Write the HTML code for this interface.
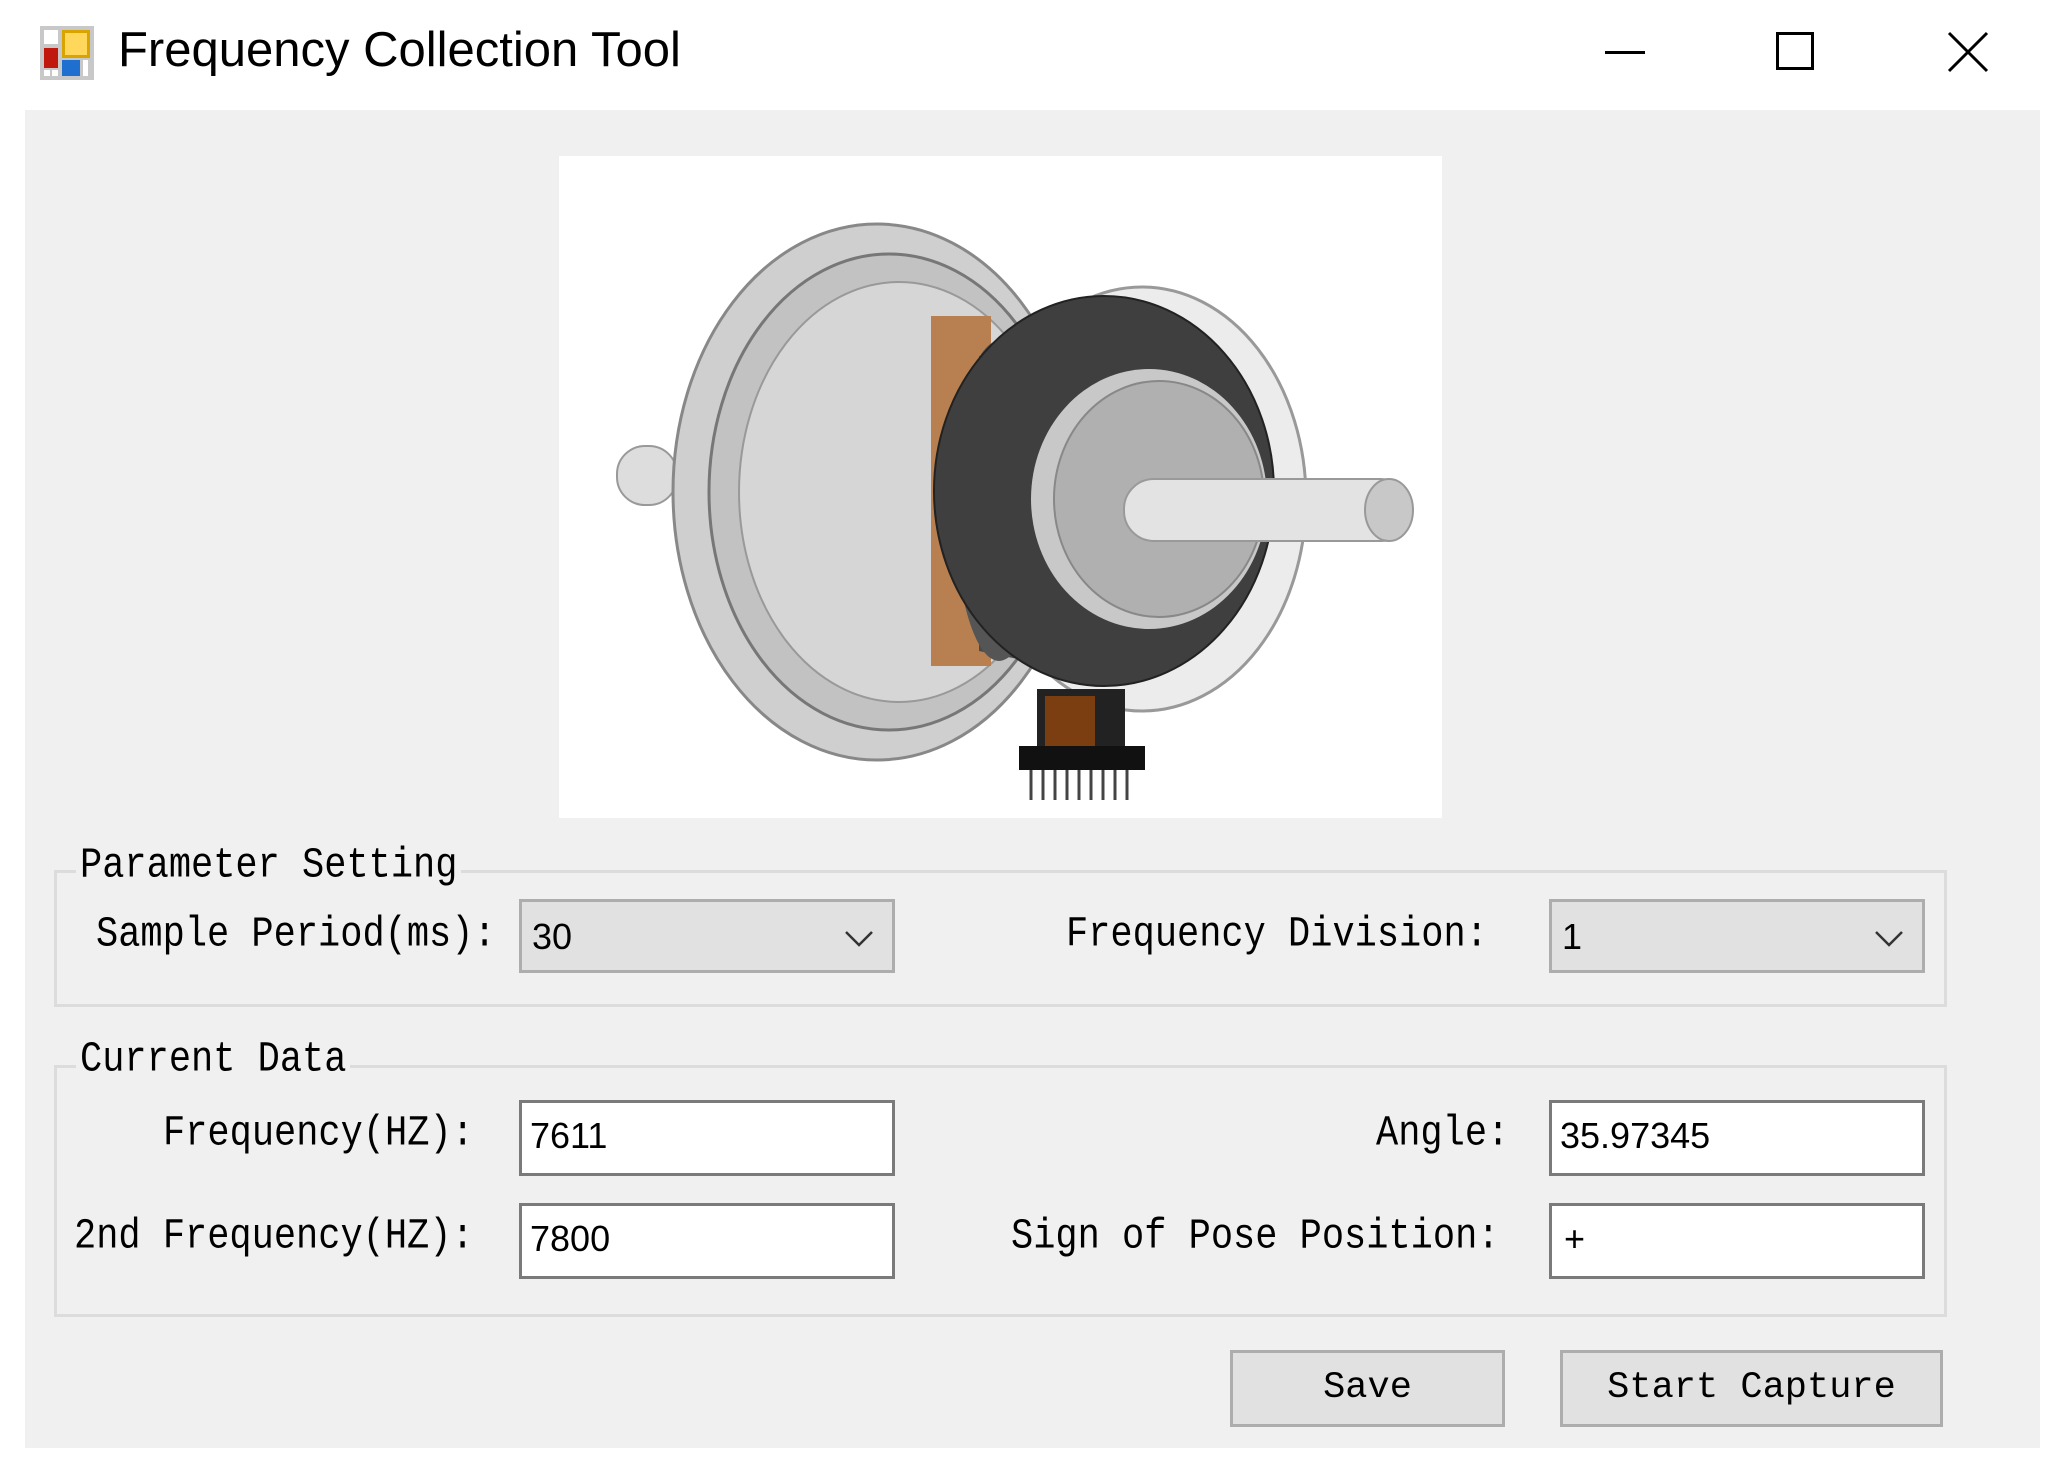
<!DOCTYPE html>
<html><head><meta charset="utf-8"><style>
html,body{margin:0;padding:0;background:#fff;}
body{width:2059px;height:1469px;position:relative;overflow:hidden;font-family:"Liberation Mono",monospace;}
.abs{position:absolute;}
.client{left:25px;top:110px;width:2015px;height:1338px;background:#f0f0f0;}
.title{left:118px;top:22px;font-family:"Liberation Sans",sans-serif;font-size:49px;color:#000;}
.lbl{position:absolute;font-size:37px;color:#000;white-space:nowrap;line-height:40px;transform:scaleY(1.15);}
.grp{position:absolute;border:3px solid #dcdcdc;box-sizing:border-box;}
.combo{position:absolute;background:#e1e1e1;border:3px solid #adadad;box-sizing:border-box;font-family:"Liberation Sans",sans-serif;font-size:36px;}
.tb{position:absolute;background:#fff;border:3px solid #7a7a7a;box-sizing:border-box;font-family:"Liberation Sans",sans-serif;font-size:36px;}
.btn{position:absolute;background:#e1e1e1;border:3px solid #adadad;box-sizing:border-box;text-align:center;font-size:37px;line-height:70px;}
</style></head><body>
<svg class="abs" style="left:40px;top:26px" width="54" height="54" viewBox="0 0 54 54">
<rect x="0" y="0" width="54" height="54" fill="#c8c8c8"/>
<rect x="4" y="4" width="14" height="14" fill="#fff"/>
<rect x="22" y="4" width="28" height="28" fill="#d9a300"/><rect x="25" y="7" width="22" height="22" fill="#ffd75a"/>
<rect x="4" y="22" width="14" height="20" fill="#c0180c"/>
<rect x="22" y="34" width="18" height="16" fill="#1e6fd0"/>
<rect x="4" y="44" width="6" height="6" fill="#fff"/><rect x="12" y="44" width="6" height="6" fill="#fff"/><rect x="43" y="34" width="5" height="16" fill="#fff"/>
</svg>
<div class="abs title">Frequency Collection Tool</div>
<div class="abs" style="left:1605px;top:51px;width:40px;height:3px;background:#000"></div>
<div class="abs" style="left:1776px;top:32px;width:38px;height:38px;border:3px solid #000;box-sizing:border-box"></div>
<svg class="abs" style="left:1946px;top:30px" width="44" height="44"><path d="M3 3L41 41M41 3L3 41" stroke="#000" stroke-width="3"/></svg>
<div class="abs client"></div>
<svg class="abs" style="left:559px;top:156px" width="883" height="662" viewBox="0 0 883 662">
<rect width="883" height="662" fill="#fff"/>
<rect x="58" y="290" width="60" height="59" rx="28" fill="#ddd" stroke="#999" stroke-width="2"/>
<ellipse cx="318" cy="336" rx="204" ry="268" fill="#cfcfcf" stroke="#888" stroke-width="3"/>
<ellipse cx="330" cy="336" rx="180" ry="238" fill="#c2c2c2" stroke="#777" stroke-width="3"/>
<ellipse cx="340" cy="336" rx="160" ry="210" fill="#d6d6d6" stroke="#999" stroke-width="2"/>
<ellipse cx="583" cy="343" rx="164" ry="212" fill="#ececec" stroke="#999" stroke-width="3"/>
<rect x="372" y="160" width="60" height="350" fill="#b88050"/>
<path d="M420 200 L540 170 L540 520 L420 495 Z" fill="#4a4a4a"/>
<ellipse cx="440" cy="345" rx="45" ry="160" fill="#555"/>
<ellipse cx="545" cy="335" rx="170" ry="195" fill="#3f3f3f" stroke="#222" stroke-width="2"/>
<ellipse cx="590" cy="343" rx="118" ry="130" fill="#c8c8c8"/>
<ellipse cx="600" cy="343" rx="105" ry="118" fill="#b0b0b0" stroke="#888" stroke-width="2"/>
<rect x="565" y="323" width="287" height="62" rx="30" fill="#e3e3e3" stroke="#999" stroke-width="2"/>
<ellipse cx="830" cy="354" rx="24" ry="31" fill="#c8c8c8" stroke="#999" stroke-width="2"/>
<rect x="478" y="533" width="88" height="70" fill="#222"/>
<rect x="486" y="540" width="50" height="55" fill="#7a3e10"/>
<rect x="460" y="590" width="126" height="24" fill="#111"/>
<g stroke="#444" stroke-width="3"><path d="M472 614v30M484 614v30M496 614v30M508 614v30M520 614v30M532 614v30M544 614v30M556 614v30M568 614v30"/></g>
</svg>
<div class="grp" style="left:54px;top:870px;width:1893px;height:137px"></div>
<div class="lbl" style="left:76px;top:846px;background:#f0f0f0;padding:0 4px">Parameter Setting</div>
<div class="lbl" style="left:96px;top:915px">Sample Period(ms):</div>
<div class="combo" style="left:519px;top:899px;width:376px;height:74px"><span style="position:absolute;left:10px;top:14px">30</span><svg style="position:absolute;right:18px;top:28px" width="30" height="18"><path d="M2 2L15 15L28 2" fill="none" stroke="#333" stroke-width="2.5"/></svg></div>
<div class="lbl" style="left:1066px;top:915px">Frequency Division:</div>
<div class="combo" style="left:1549px;top:899px;width:376px;height:74px"><span style="position:absolute;left:10px;top:14px">1</span><svg style="position:absolute;right:18px;top:28px" width="30" height="18"><path d="M2 2L15 15L28 2" fill="none" stroke="#333" stroke-width="2.5"/></svg></div>
<div class="grp" style="left:54px;top:1065px;width:1893px;height:252px"></div>
<div class="lbl" style="left:76px;top:1040px;background:#f0f0f0;padding:0 4px">Current Data</div>
<div class="lbl" style="left:163px;top:1114px">Frequency(HZ):</div>
<div class="tb" style="left:519px;top:1100px;width:376px;height:76px"><span style="position:absolute;left:8px;top:12px">7611</span></div>
<div class="lbl" style="left:74px;top:1217px">2nd Frequency(HZ):</div>
<div class="tb" style="left:519px;top:1203px;width:376px;height:76px"><span style="position:absolute;left:8px;top:12px">7800</span></div>
<div class="lbl" style="left:1376px;top:1114px">Angle:</div>
<div class="tb" style="left:1549px;top:1100px;width:376px;height:76px"><span style="position:absolute;left:8px;top:12px">35.97345</span></div>
<div class="lbl" style="left:1011px;top:1217px">Sign of Pose Position:</div>
<div class="tb" style="left:1549px;top:1203px;width:376px;height:76px"><span style="position:absolute;left:12px;top:12px">+</span></div>
<div class="btn" style="left:1230px;top:1350px;width:275px;height:77px">Save</div>
<div class="btn" style="left:1560px;top:1350px;width:383px;height:77px">Start Capture</div>
</body></html>
